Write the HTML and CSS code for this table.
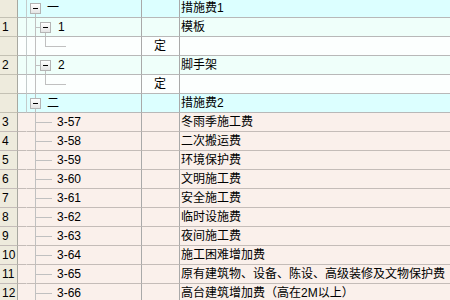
FILE: index.html
```html
<!DOCTYPE html>
<html>
<head>
<meta charset="utf-8">
<link rel="stylesheet" href="styles.css">
</head>
<body>
<div class="grid">
  <div class="row sec">
    <div class="c num"></div><div class="c gap"></div>
    <div class="c tree t-root"><div class="node lv1"><span class="box"></span><span class="lbl">一</span></div></div>
    <div class="c mid"></div><div class="c name">措施费1</div>
  </div>
  <div class="row sub">
    <div class="c num">1</div><div class="c gap"></div>
    <div class="c tree t-l2"><div class="node lv2"><span class="box"></span><span class="lbl">1</span></div></div>
    <div class="c mid"></div><div class="c name">模板</div>
  </div>
  <div class="row leaf">
    <div class="c num"></div><div class="c gap"></div>
    <div class="c tree t-leaf"></div>
    <div class="c mid">定</div><div class="c name"></div>
  </div>
  <div class="row sub">
    <div class="c num">2</div><div class="c gap"></div>
    <div class="c tree t-l2"><div class="node lv2"><span class="box"></span><span class="lbl">2</span></div></div>
    <div class="c mid"></div><div class="c name">脚手架</div>
  </div>
  <div class="row leaf">
    <div class="c num"></div><div class="c gap"></div>
    <div class="c tree t-leaf"></div>
    <div class="c mid">定</div><div class="c name"></div>
  </div>
  <div class="row sec">
    <div class="c num"></div><div class="c gap"></div>
    <div class="c tree t-root2"><div class="node lv1"><span class="box"></span><span class="lbl">二</span></div></div>
    <div class="c mid"></div><div class="c name">措施费2</div>
  </div>
  <div class="row item"><div class="c num">3</div><div class="c gap"></div><div class="c tree t-item"><span class="code">3-57</span></div><div class="c mid"></div><div class="c name">冬雨季施工费</div></div>
  <div class="row item"><div class="c num">4</div><div class="c gap"></div><div class="c tree t-item"><span class="code">3-58</span></div><div class="c mid"></div><div class="c name">二次搬运费</div></div>
  <div class="row item"><div class="c num">5</div><div class="c gap"></div><div class="c tree t-item"><span class="code">3-59</span></div><div class="c mid"></div><div class="c name">环境保护费</div></div>
  <div class="row item"><div class="c num">6</div><div class="c gap"></div><div class="c tree t-item"><span class="code">3-60</span></div><div class="c mid"></div><div class="c name">文明施工费</div></div>
  <div class="row item"><div class="c num">7</div><div class="c gap"></div><div class="c tree t-item"><span class="code">3-61</span></div><div class="c mid"></div><div class="c name">安全施工费</div></div>
  <div class="row item"><div class="c num">8</div><div class="c gap"></div><div class="c tree t-item"><span class="code">3-62</span></div><div class="c mid"></div><div class="c name">临时设施费</div></div>
  <div class="row item"><div class="c num">9</div><div class="c gap"></div><div class="c tree t-item"><span class="code">3-63</span></div><div class="c mid"></div><div class="c name">夜间施工费</div></div>
  <div class="row item"><div class="c num">10</div><div class="c gap"></div><div class="c tree t-item"><span class="code">3-64</span></div><div class="c mid"></div><div class="c name">施工困难增加费</div></div>
  <div class="row item"><div class="c num">11</div><div class="c gap"></div><div class="c tree t-item"><span class="code">3-65</span></div><div class="c mid"></div><div class="c name">原有建筑物、设备、陈设、高级装修及文物保护费</div></div>
  <div class="row item"><div class="c num">12</div><div class="c gap"></div><div class="c tree t-item"><span class="code">3-66</span></div><div class="c mid"></div><div class="c name">高台建筑增加费（高在2M以上）</div></div>
</div>
</body>
</html>
```
FILE: styles.css
```css
html, body {
  margin: 0;
  padding: 0;
  overflow: hidden;
  background: #ffffff;
}
body {
  font-family: "Liberation Sans", "Noto Sans CJK SC", sans-serif;
  font-size: 12px;
  color: #000;
}
.grid {
  margin-top: -1px;
  width: 450px;
}
.row {
  display: grid;
  grid-template-columns: 18px 9px 115px 38px 1fr;
  height: 19px;
}
.c {
  box-sizing: border-box;
  height: 19px;
  border-bottom: 1px solid #b8b8b8;
  border-right: 1px solid #a9a9a9;
  line-height: 18px;
  white-space: nowrap;
  overflow: hidden;
}
.c.name { border-right: none; padding-left: 1px; }
.c.num {
  background: #eeebdd;
  border-right-color: #a8a8a0;
  border-bottom-color: #c4c1b4;
  padding-left: 2px;
}
.c.gap { border-right-color: #c4cccc; }
.c.mid { text-align: center; padding-right: 1px; }

.sec .c:not(.num) { background-color: #dcffff; }
.sub .c:not(.num) { background-color: #effffa; }
.leaf .c:not(.num) { background-color: #fcfffe; }
.item .c:not(.num) { background-color: #faf0eb; }
.item .c { border-bottom-color: #c4bcb8; }
.item .c.gap { border-right-color: #faf0eb; }

/* tree lines */
.tree { background-repeat: no-repeat; }
.t-root {
  background-image: linear-gradient(#c0c0c0, #c0c0c0);
  background-position: 8px 9px;
  background-size: 1px 9px;
}
.t-root2 {
  background-image: linear-gradient(#c0c0c0, #c0c0c0);
  background-position: 8px 0;
  background-size: 1px 18px;
}
.t-l2 {
  background-image:
    linear-gradient(#c0c0c0, #c0c0c0),
    linear-gradient(#c0c0c0, #c0c0c0),
    linear-gradient(#c0c0c0, #c0c0c0);
  background-position: 8px 0, 8px 9px, 18px 9px;
  background-size: 1px 18px, 6px 1px, 1px 9px;
}
.t-leaf {
  background-image:
    linear-gradient(#c0c0c0, #c0c0c0),
    linear-gradient(#c0c0c0, #c0c0c0),
    linear-gradient(#c0c0c0, #c0c0c0);
  background-position: 8px 0, 18px 0, 18px 9px;
  background-size: 1px 18px, 1px 9px, 21px 1px;
}
.t-item {
  background-image:
    linear-gradient(#c0c0c0, #c0c0c0),
    linear-gradient(#c0c0c0, #c0c0c0);
  background-position: 8px 0, 8px 9px;
  background-size: 1px 18px, 17px 1px;
  padding-left: 30px;
}

.node {
  display: flex;
  align-items: center;
  height: 18px;
}
.node.lv1 { padding-left: 3px; }
.node.lv2 { padding-left: 13px; }
.box {
  box-sizing: border-box;
  width: 11px;
  height: 11px;
  border: 1px solid #b4b4b4;
  background: linear-gradient(#ffffff, #e4e4e4);
  display: flex;
  align-items: center;
  justify-content: center;
  flex: none;
}
.box::before {
  content: "";
  width: 5px;
  height: 1px;
  background: #000;
}
.lv1 .lbl { margin-left: 6px; }
.lv2 .lbl { margin-left: 7px; }
.code { letter-spacing: 0; }
```
